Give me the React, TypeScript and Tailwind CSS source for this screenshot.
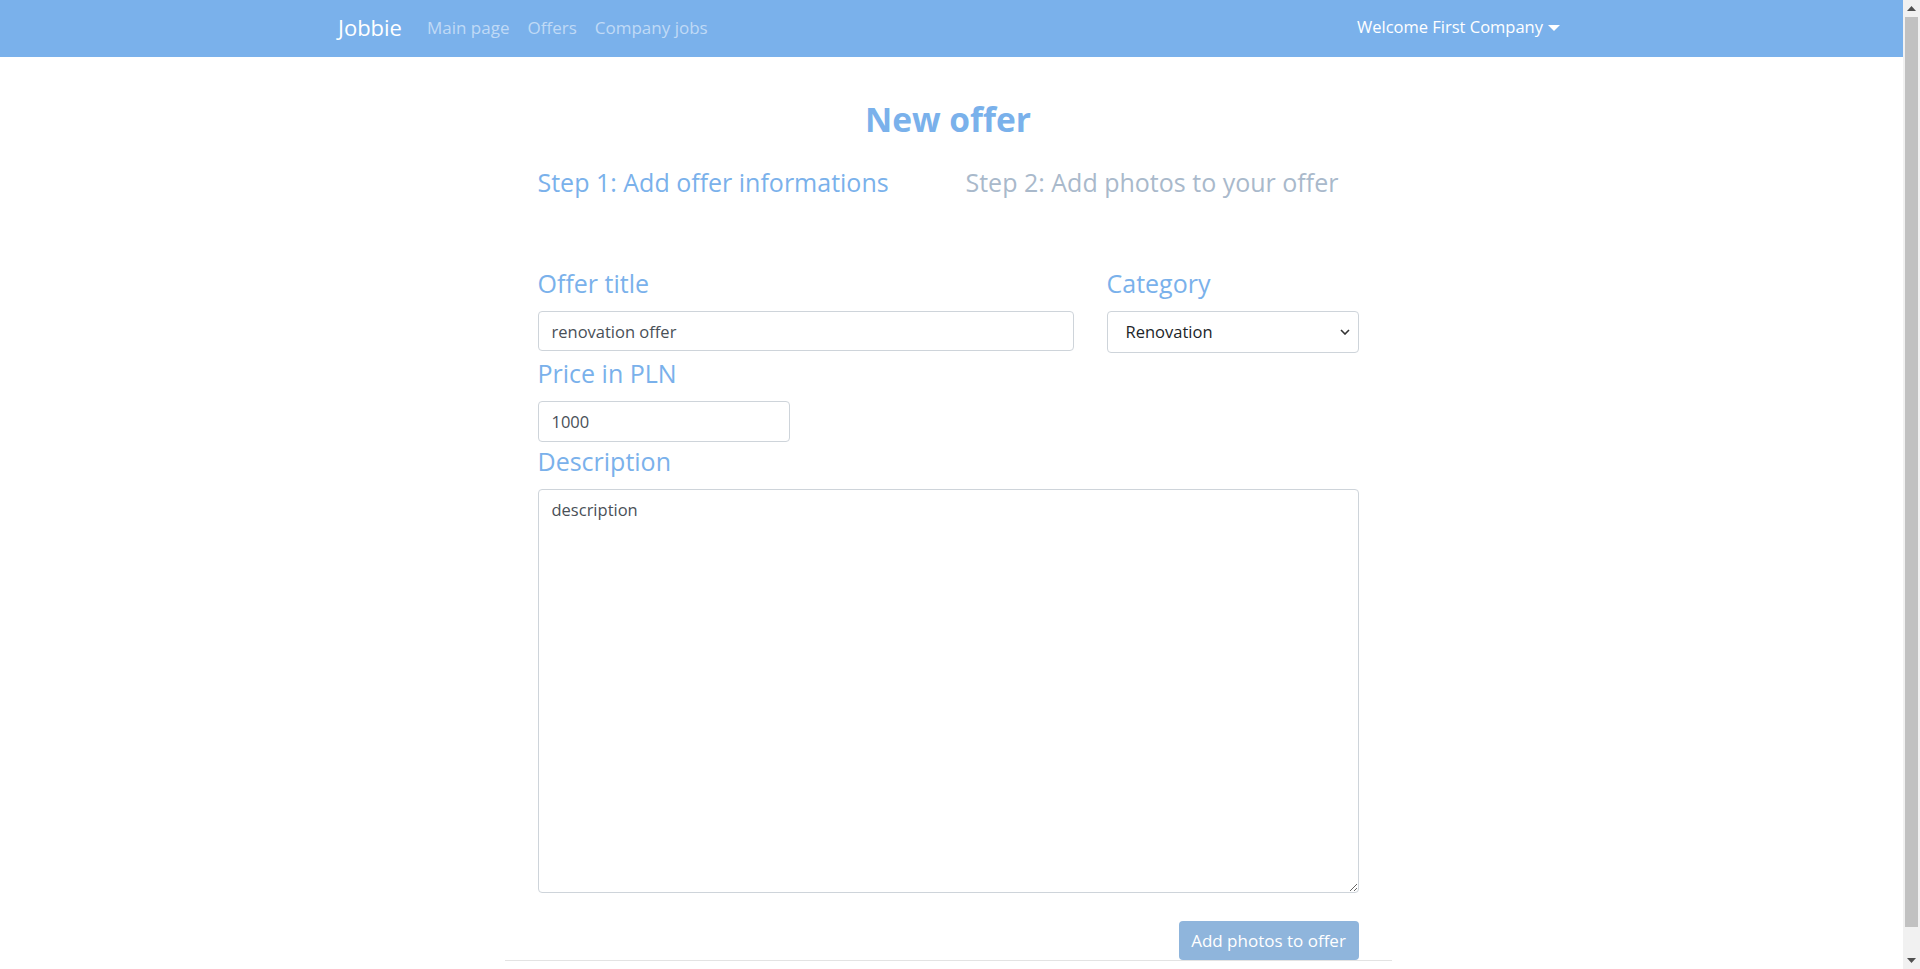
import React from "react";

function Label({ children }: { children: React.ReactNode }) {
  return (
    <div className="text-[25px] leading-[24px] text-[#7ab1eb] mb-[16px]">{children}</div>
  );
}

export default function App() {
  return (
    <div className="h-screen overflow-hidden flex bg-white font-['Open_Sans','Noto_Sans',sans-serif]">
      <div className="flex-1 min-w-0">
        <nav className="h-[57px] bg-[#7ab1eb] pr-[5px]">
          <div className="w-[1222px] mx-auto h-full flex items-center justify-between pb-[2px]">
            <div className="flex items-center">
              <span className="text-[22px] text-white leading-none mb-[2px]">Jobbie</span>
              <div className="flex items-center gap-[18px] ml-[25px] text-[17px] text-[#c0daf6]">
                <span>Main page</span>
                <span>Offers</span>
                <span>Company jobs</span>
              </div>
            </div>
            <div className="flex items-center text-[16.5px] text-white">
              <span>Welcome First Company</span>
              <span className="ml-[5px] inline-block w-0 h-0 border-x-[6px] border-x-transparent border-t-[6px] border-t-white" />
            </div>
          </div>
        </nav>

        <div className="pr-[7px]">
          <main className="w-[887px] mx-auto border-b border-[#e3e3e3] px-[33px]">
            <h1 className="mt-[42px] text-center text-[33.5px] font-bold leading-[40px] text-[#7ab1eb]">
              New offer
            </h1>

            <div className="mt-[28px] flex text-[25px] leading-[30px]">
              <div className="w-[428px] text-[#7ab1eb]">Step 1: Add offer informations</div>
              <div className="text-[#a9b9cb]">Step 2: Add photos to your offer</div>
            </div>

            <div className="mt-[74px] grid grid-cols-[536px_252px] gap-x-[33px]">
              <div>
                <Label>Offer title</Label>
                <input
                  type="text"
                  defaultValue="renovation offer"
                  className="w-full h-[40px] border border-[#ced4da] rounded-[4px] px-[13px] text-[16.5px] text-[#495057] outline-none"
                />
              </div>
              <div>
                <Label>Category</Label>
                <div className="relative">
                  <select
                    defaultValue="Renovation"
                    className="appearance-none w-full h-[42px] border border-[#ced4da] rounded-[4px] pl-[18px] pr-8 text-[16.5px] text-[#212529] bg-white outline-none"
                  >
                    <option>Renovation</option>
                    <option>Construction</option>
                    <option>Cleaning</option>
                  </select>
                  <svg
                    className="absolute right-[9px] top-[18px] pointer-events-none"
                    width="10"
                    height="6"
                    viewBox="0 0 10 6"
                  >
                    <path d="M1 1 L5 5 L9 1" fill="none" stroke="#333" strokeWidth="1.6" />
                  </svg>
                </div>
              </div>
            </div>

            <div className="mt-[8px]">
              <Label>Price in PLN</Label>
              <input
                type="text"
                defaultValue="1000"
                className="w-[252px] h-[41px] border border-[#ced4da] rounded-[4px] px-[13px] text-[16.5px] text-[#495057] outline-none"
              />
            </div>

            <div className="mt-[7px]">
              <Label>Description</Label>
              <textarea
                defaultValue="description"
                className="block w-full h-[404px] border border-[#ced4da] rounded-[4px] px-[13px] pt-[8px] pb-[6px] text-[16.5px] leading-[1.5] text-[#495057] outline-none"
              />
            </div>

            <div className="mt-[28px] flex justify-end">
              <button className="w-[180px] h-[39px] rounded-[4px] bg-[#8fb5dc] text-white text-[17px]">
                Add photos to offer
              </button>
            </div>
          </main>
        </div>
      </div>

      <div className="w-[17px] h-full bg-[#f1f1f1] flex flex-col items-center">
        <div className="h-[17px] w-full flex items-center justify-center">
          <svg width="9" height="5" viewBox="0 0 9 5">
            <path d="M0 5 L4.5 0 L9 5 Z" fill="#505050" />
          </svg>
        </div>
        <div className="w-[13px] h-[910px] bg-[#c1c1c1]" />
        <div className="flex-1" />
        <div className="h-[17px] w-full flex items-center justify-center">
          <svg width="9" height="5" viewBox="0 0 9 5">
            <path d="M0 0 L4.5 5 L9 0 Z" fill="#505050" />
          </svg>
        </div>
      </div>
    </div>
  );
}
